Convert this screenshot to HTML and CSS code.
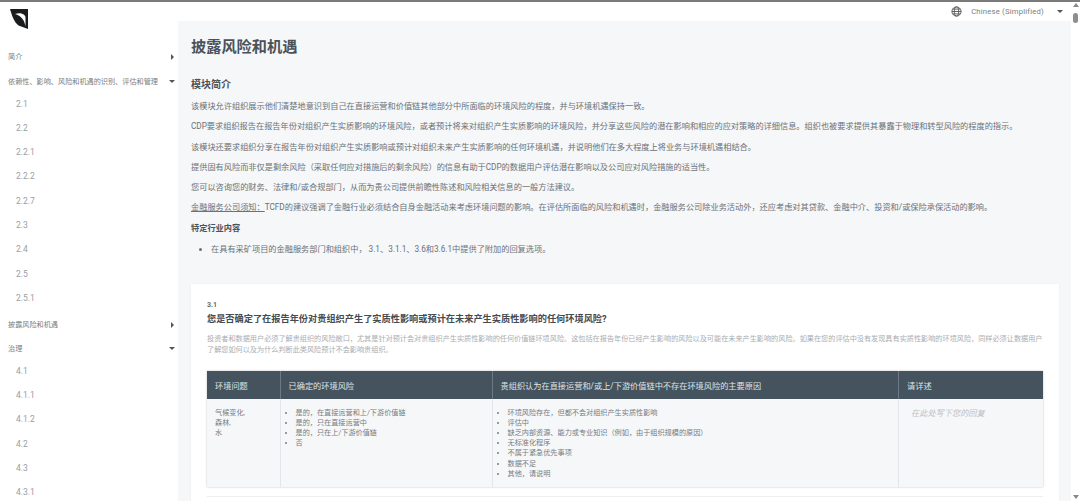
FILE: index.html
```html
<!DOCTYPE html>
<html lang="zh-CN">
<head>
    <meta charset="UTF-8">
    <title>披露风险和机遇</title>
    <link rel="stylesheet" href="styles.css">
</head>
<body>
    <div class="page">
        <div class="sidebar">
            <svg class="logo" width="19" height="21" viewBox="0 0 19 21">
                <path d="M0 0H18V20L8.5 16.5C4 13 2 7 0 0Z" fill="#1a1c1e"/>
                <path d="M5 5C10 3 15 5 15.5 8V17.5C14.5 11 11 6.5 5 5Z" fill="#fff"/>
            </svg>
            <div class="nav-top first">简介<span class="arrow-right"></span></div>
            <div class="nav-top second">依赖性、影响、风险和机遇的识别、评估和管理<span class="arrow-down"></span></div>
            <div class="nav-subs">
                <div class="nav-sub">2.1</div>
                <div class="nav-sub">2.2</div>
                <div class="nav-sub">2.2.1</div>
                <div class="nav-sub">2.2.2</div>
                <div class="nav-sub">2.2.7</div>
                <div class="nav-sub">2.3</div>
                <div class="nav-sub">2.4</div>
                <div class="nav-sub">2.5</div>
                <div class="nav-sub">2.5.1</div>
            </div>
            <div class="nav-top">披露风险和机遇<span class="arrow-right"></span></div>
            <div class="nav-top">治理<span class="arrow-down"></span></div>
            <div class="nav-subs">
                <div class="nav-sub">4.1</div>
                <div class="nav-sub">4.1.1</div>
                <div class="nav-sub">4.1.2</div>
                <div class="nav-sub">4.2</div>
                <div class="nav-sub">4.3</div>
                <div class="nav-sub">4.3.1</div>
            </div>
        </div>

        <div class="right">
            <div class="topbar">
                <svg class="globe" width="11" height="11" viewBox="0 0 12 12" fill="none" stroke="#555" stroke-width="1">
                    <circle cx="6" cy="6" r="5"/>
                    <ellipse cx="6" cy="6" rx="2.4" ry="5"/>
                    <path d="M1 6H11M1.7 3.4H10.3M1.7 8.6H10.3"/>
                </svg>
                <span class="lang">Chinese (Simplified)</span>
                <span class="arrow-down lang-arrow"></span>
            </div>
            <div class="main">
                <h1>披露风险和机遇</h1>
                <h3>模块简介</h3>
                <p>该模块允许组织展示他们清楚地意识到自己在直接运营和价值链其他部分中所面临的环境风险的程度，并与环境机遇保持一致。</p>
                <p>CDP要求组织报告在报告年份对组织产生实质影响的环境风险，或者预计将来对组织产生实质影响的环境风险，并分享这些风险的潜在影响和相应的应对策略的详细信息。组织也被要求提供其暴露于物理和转型风险的程度的指示。</p>
                <p>该模块还要求组织分享在报告年份对组织产生实质影响或预计对组织未来产生实质影响的任何环境机遇，并说明他们在多大程度上将业务与环境机遇相结合。</p>
                <p>提供固有风险而非仅是剩余风险（采取任何应对措施后的剩余风险）的信息有助于CDP的数据用户评估潜在影响以及公司应对风险措施的适当性。</p>
                <p>您可以咨询您的财务、法律和/或合规部门，从而为贵公司提供前瞻性陈述和风险相关信息的一般方法建议。</p>
                <p><u>金融服务公司须知：</u>TCFD的建议强调了金融行业必须结合自身金融活动来考虑环境问题的影响。在评估所面临的风险和机遇时，金融服务公司除业务活动外，还应考虑对其贷款、金融中介、投资和/或保险承保活动的影响。</p>
                <p class="sector">特定行业内容</p>
                <ul class="sector-list">
                    <li>在具有采矿项目的金融服务部门和组织中， 3.1、3.1.1、3.6和3.6.1中提供了附加的回复选项。</li>
                </ul>

                <div class="card">
                    <div class="q-num">3.1</div>
                    <div class="q-title">您是否确定了在报告年份对贵组织产生了实质性影响或预计在未来产生实质性影响的任何环境风险?</div>
                    <div class="q-desc">投资者和数据用户必须了解贵组织的风险敞口，尤其是针对预计会对贵组织产生实质性影响的任何价值链环境风险。这包括在报告年份已经产生影响的风险以及可能在未来产生影响的风险。如果在您的评估中没有发现具有实质性影响的环境风险，同样必须让数据用户了解您如何以及为什么判断此类风险预计不会影响贵组织。</div>
                    <div class="q-table">
                        <div class="th">环境问题</div>
                        <div class="th">已确定的环境风险</div>
                        <div class="th">贵组织认为在直接运营和/或上/下游价值链中不存在环境风险的主要原因</div>
                        <div class="th">请详述</div>
                        <div class="td">气候变化,<br>森林,<br>水</div>
                        <div class="td">
                            <ul>
                                <li>是的，在直接运营和上/下游价值链</li>
                                <li>是的，只在直接运营中</li>
                                <li>是的，只在上/下游价值链</li>
                                <li>否</li>
                            </ul>
                        </div>
                        <div class="td">
                            <ul>
                                <li>环境风险存在，但都不会对组织产生实质性影响</li>
                                <li>评估中</li>
                                <li>缺乏内部资源、能力或专业知识（例如，由于组织规模的原因）</li>
                                <li>无标准化程序</li>
                                <li>不属于紧急优先事项</li>
                                <li>数据不足</li>
                                <li>其他，请说明</li>
                            </ul>
                        </div>
                        <div class="td placeholder">在此处写下您的回复</div>
                    </div>
                    <div class="q-rule"></div>
                </div>
            </div>
        </div>

        <div class="scrollbar">
            <span class="sb-up"></span>
            <span class="sb-thumb"></span>
            <span class="sb-fill"></span>
            <span class="sb-down"></span>
        </div>
    </div>
</body>
</html>
```

FILE: styles.css
```css
* {
    box-sizing: border-box;
}

html, body {
    margin: 0;
    height: 100%;
    overflow: hidden;
}

body {
    background: #fff;
    color: #555c63;
    font-family: "Roboto", "Noto Sans CJK SC", sans-serif;
    border-top: 2px solid #7b7b7b;
}

.page {
    display: flex;
    height: 499px;
}

/* sidebar */
.sidebar {
    width: 178px;
    flex-shrink: 0;
    overflow: hidden;
}

.logo {
    display: block;
    margin: 7px 0 0 10px;
}

.nav-top {
    position: relative;
    height: 24px;
    line-height: 24px;
    padding-left: 8px;
    font-size: 7.15px;
    color: #7a8085;
}

.nav-top.first {
    margin-top: 15px;
}

.nav-top.second {
    margin-top: 1px;
}

.nav-subs {
    margin: -2.5px 0 3px;
}

.nav-sub {
    height: 24.3px;
    line-height: 24.3px;
    padding-left: 16px;
    font-size: 8.5px;
    color: #9a9ea2;
}

.arrow-right, .arrow-down {
    position: absolute;
    width: 0;
    height: 0;
}

.arrow-right {
    right: 4px;
    top: 9px;
    border-left: 3px solid #555;
    border-top: 3px solid transparent;
    border-bottom: 3px solid transparent;
}

.arrow-down {
    right: 3px;
    top: 10px;
    border-top: 3px solid #555;
    border-left: 3px solid transparent;
    border-right: 3px solid transparent;
}

/* main column */
.right {
    flex: 1;
    min-width: 0;
}

.topbar {
    display: flex;
    align-items: center;
    justify-content: flex-end;
    height: 19px;
    padding-right: 8px;
}

.globe {
    margin-right: 9px;
}

.lang {
    font-size: 7.7px;
    letter-spacing: 0.2px;
    color: #7a8085;
    margin-right: 13px;
}

.lang-arrow {
    position: static;
}

.main {
    background: #f5f7f9;
    height: 480px;
    padding: 0 12px 0 13px;
    overflow: hidden;
}

h1 {
    margin: 0;
    padding-top: 16px;
    font-size: 15.2px;
    line-height: 20px;
    font-weight: 700;
    color: #4b5258;
}

h3 {
    margin: 21px 0 4px;
    font-size: 10px;
    line-height: 14px;
    font-weight: 700;
    color: #4b5258;
}

.main p {
    margin: 0;
    height: 20.3px;
    line-height: 20.3px;
    font-size: 8.2px;
    color: #6b7177;
    white-space: nowrap;
}

.main p.sector {
    font-weight: 700;
    color: #4b5258;
}

.sector-list {
    margin: 1px 0 0;
    padding-left: 20px;
    font-size: 8.2px;
    line-height: 20px;
    color: #6b7177;
}

/* question card */
.card {
    margin: 25px 0 0;
    background: #fff;
    height: 300px;
    padding: 17px 16px 0;
    box-shadow: 0 0 2px rgba(0, 0, 0, 0.06);
}

.q-num {
    font-size: 7px;
    line-height: 9px;
    font-weight: 700;
    color: #666c72;
}

.q-title {
    margin-top: 2px;
    font-size: 9.2px;
    line-height: 14px;
    font-weight: 700;
    color: #444b51;
}

.q-desc {
    margin-top: 7px;
    font-size: 7.15px;
    line-height: 11px;
    color: #a9adb1;
}

.q-table {
    display: grid;
    grid-template-columns: 72.5px 212px 406.5px 145px;
    grid-template-rows: 28px 88px;
    margin-top: 16px;
    box-shadow: 0 0 2px rgba(0, 0, 0, 0.25);
}

.th {
    display: flex;
    align-items: center;
    padding-left: 8px;
    background: #45535f;
    color: #dfe3e6;
    font-size: 8.2px;
    border-left: 1px solid #6d7a85;
}

.th:first-child {
    border-left: 0;
}

.td {
    padding: 9px 8px 0;
    background: #f5f7f9;
    font-size: 7.15px;
    line-height: 10.1px;
    color: #767c81;
    border-left: 1px solid #e3e6e8;
}

.td:nth-child(5) {
    border-left: 0;
}

.td ul {
    margin: 0;
    padding-left: 7px;
}

.td.placeholder {
    padding-left: 12px;
    font-size: 8.2px;
    font-style: italic;
    color: #bcc0c3;
}

.q-rule {
    margin-top: 9px;
    border-top: 1px solid #eceeef;
}

/* scrollbar */
.scrollbar {
    display: flex;
    flex-direction: column;
    align-items: center;
    width: 9px;
    flex-shrink: 0;
    padding: 1px 0 2px;
}

.sb-up {
    border-bottom: 4px solid #888;
    border-left: 3px solid transparent;
    border-right: 3px solid transparent;
}

.sb-thumb {
    margin-top: 6px;
    width: 5px;
    height: 10px;
    border-radius: 3px;
    background: #8e8e8e;
}

.sb-fill {
    flex: 1;
}

.sb-down {
    border-top: 4px solid #888;
    border-left: 3px solid transparent;
    border-right: 3px solid transparent;
}
```
